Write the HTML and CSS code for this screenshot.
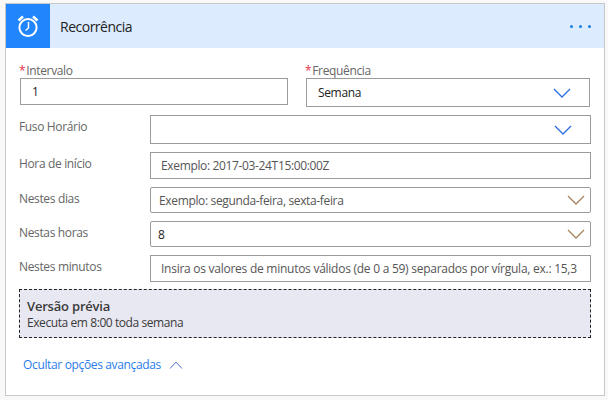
FILE: index.html
```html
<!DOCTYPE html>
<html lang="pt">
<head>
    <meta charset="UTF-8">
    <title>Recorrência</title>
    <link rel="stylesheet" href="styles.css">
</head>
<body>
    <div class="card">
        <!-- Header -->
        <div class="card-header">
            <div class="header-icon">
                <svg width="24" height="24" viewBox="0 0 24 24" fill="none" stroke="#fff">
                    <circle cx="12" cy="13.5" r="8.6" stroke-width="2"/>
                    <path d="M12.5 8v6l-3 2.5" stroke-width="1.5"/>
                    <path d="M2.5 6.5 7 2.5M21.5 6.5 17 2.5" stroke-width="2.4"/>
                </svg>
            </div>
            <div class="header-title">Recorrência</div>
            <div class="header-more"><span></span><span></span><span></span></div>
        </div>

        <div class="card-body">
            <!-- Required fields -->
            <div class="top-row">
                <div class="top-field interval">
                    <div class="top-label"><span class="req">*</span>Intervalo</div>
                    <div class="input short">1</div>
                </div>
                <div class="top-field frequency">
                    <div class="top-label"><span class="req">*</span>Frequência</div>
                    <div class="input select">
                        <span class="value">Semana</span>
                        <svg class="chevron" width="18" height="10" viewBox="0 0 18 10" fill="none" stroke="#2b6fe0" stroke-width="1.3"><path d="M1 1l8 8 8-8"/></svg>
                    </div>
                </div>
            </div>

            <!-- Advanced fields -->
            <div class="row row-tz">
                <div class="row-label">Fuso Horário</div>
                <div class="input select tall">
                    <span class="value"></span>
                    <svg class="chevron" width="18" height="10" viewBox="0 0 18 10" fill="none" stroke="#2b6fe0" stroke-width="1.3"><path d="M1 1l8 8 8-8"/></svg>
                </div>
            </div>
            <div class="row row-start">
                <div class="row-label">Hora de início</div>
                <div class="input hint">Exemplo: 2017-03-24T15:00:00Z</div>
            </div>
            <div class="row row-days">
                <div class="row-label">Nestes dias</div>
                <div class="input select round hint">
                    <span class="value">Exemplo: segunda-feira, sexta-feira</span>
                    <svg class="chevron" width="18" height="10" viewBox="0 0 18 10" fill="none" stroke="#a6855f" stroke-width="1.3"><path d="M1 1l8 8 8-8"/></svg>
                </div>
            </div>
            <div class="row row-hours">
                <div class="row-label">Nestas horas</div>
                <div class="input select round">
                    <span class="value">8</span>
                    <svg class="chevron" width="18" height="10" viewBox="0 0 18 10" fill="none" stroke="#a6855f" stroke-width="1.3"><path d="M1 1l8 8 8-8"/></svg>
                </div>
            </div>
            <div class="row row-min">
                <div class="row-label">Nestes minutos</div>
                <div class="input hint">Insira os valores de minutos válidos (de 0 a 59) separados por vírgula, ex.: 15,3</div>
            </div>

            <!-- Preview -->
            <div class="preview">
                <div class="preview-title">Versão prévia</div>
                <div class="preview-text">Executa em 8:00 toda semana</div>
            </div>

            <a class="toggle" href="#">Ocultar opções avançadas
                <svg width="14" height="8" viewBox="0 0 14 8" fill="none" stroke="#5a6fd0" stroke-width="1"><path d="M1 7.5l6-6.5 6 6.5"/></svg>
            </a>
        </div>
    </div>
</body>
</html>
```

FILE: styles.css
```css
/* General Styles */
html, body {
    height: 100%;
}
body {
    margin: 0;
    padding: 3px 3px 4px 5px;
    box-sizing: border-box;
    font-family: 'Open Sans', sans-serif;
    font-size: 12px;
    background-color: #f8f8f8;
    color: #333;
    overflow: hidden;
}
.card {
    height: 393px;
    box-sizing: border-box;
    background: #fff;
    border: 1px solid #c8c8c8;
}

/* Header */
.card-header {
    height: 44px;
    display: flex;
    align-items: center;
    background: #dcebfe;
}
.header-icon {
    width: 44px;
    height: 44px;
    display: flex;
    align-items: center;
    justify-content: center;
    background: #2186fb;
}
.header-title {
    flex: 1;
    margin-left: 10px;
    font-size: 14px;
    letter-spacing: -0.5px;
    color: #222;
}
.header-more {
    display: flex;
    gap: 6px;
    margin-right: 13px;
}
.header-more span {
    width: 3px;
    height: 3px;
    border-radius: 50%;
    background: #1a7ce8;
}

/* Body */
.card-body {
    padding: 15px 13px 0 13px;
}
.top-row {
    display: flex;
    gap: 17px;
}
.interval {
    width: 269px;
}
.frequency {
    width: 285px;
}
.top-label {
    height: 15px;
    line-height: 15px;
    color: #666;
    letter-spacing: -0.35px;
}
.top-field .input {
    margin-left: 1px;
}
.req {
    color: #e8304a;
    margin-right: 1px;
}
.input {
    box-sizing: border-box;
    display: flex;
    align-items: center;
    border: 1px solid #9b9b9b;
    background: #fff;
    padding-left: 11px;
    color: #222;
    letter-spacing: -0.35px;
}
.short {
    height: 27px;
}
.frequency .input {
    height: 29px;
}
.select {
    justify-content: space-between;
}
.chevron {
    margin-right: 18px;
}
.round .chevron {
    margin-right: 5px;
}
.tall {
    height: 29px;
}
.round {
    border-radius: 2px;
    padding-left: 7px;
}
.hint {
    padding-left: 10px;
    color: #555;
}
.hint.select {
    padding-left: 8px;
}

/* Label + field rows */
.row {
    display: flex;
    align-items: flex-start;
}
.row-label {
    width: 131px;
    flex: none;
    color: #666;
    letter-spacing: -0.35px;
    padding-top: 3px;
}
.row .input {
    flex: 1;
}
.row-tz {
    margin-top: 8px;
}
.row-start {
    margin-top: 8px;
}
.row-start .input {
    height: 27px;
}
.row-days {
    margin-top: 8px;
}
.row-days .input {
    height: 26px;
}
.row-hours {
    margin-top: 8px;
}
.row-hours .input {
    height: 26px;
}
.row-min {
    margin-top: 8px;
}
.row-min .input {
    height: 27px;
    letter-spacing: -0.26px;
}

/* Preview */
.preview {
    box-sizing: border-box;
    height: 49px;
    margin-top: 7px;
    padding: 7px 7px;
    background: #e8e8f2;
    border: 1px dashed #222;
}
.preview-title {
    font-size: 13px;
    font-weight: 600;
    line-height: 18px;
    letter-spacing: -0.2px;
    color: #3a3a3a;
}
.preview-text {
    font-size: 12px;
    line-height: 16px;
    letter-spacing: -0.42px;
    color: #3a3a3a;
}
.toggle {
    display: flex;
    align-items: center;
    gap: 8px;
    margin-top: 18px;
    margin-left: 4px;
    color: #2b7de9;
    text-decoration: none;
    letter-spacing: -0.35px;
}
```
